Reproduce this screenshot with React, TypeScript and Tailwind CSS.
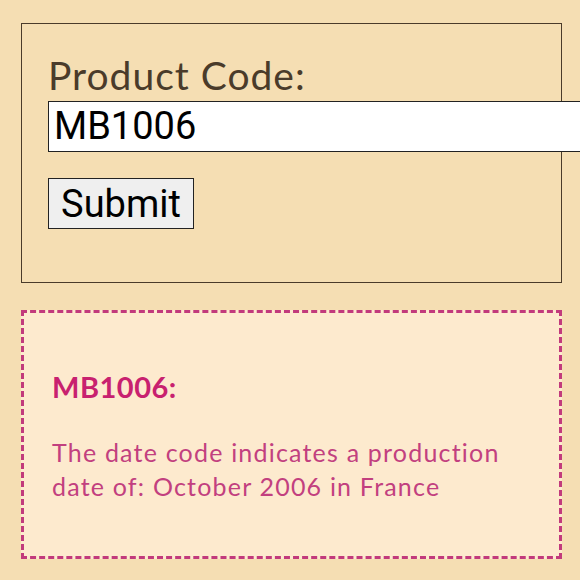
import React, { useState } from 'react';

const App: React.FC = () => {
    const [code, setCode] = useState('MB1006');

    return (
        <div className="min-h-[580px] w-[580px] overflow-hidden bg-[#f5deb3] pl-[21px] pr-[18px] pt-[23px] font-['Lato',sans-serif]">
            <form className="border border-[#4a3b2a] pl-[26px] pt-[27px] pb-[53px]" onSubmit={e => e.preventDefault()}>
                <label htmlFor="code" className="block text-[39px] leading-[48px] tracking-[1px] text-[#4a3b2a]">Product Code:</label>
                <input
                    id="code"
                    value={code}
                    onChange={e => setCode(e.target.value)}
                    className="mt-[2px] block h-[51px] w-[560px] border border-[#222] bg-white px-[5px] font-['Roboto',sans-serif] text-[38px] text-black outline-none"
                />
                <button type="submit" className="mt-[26px] block h-[51px] w-[146px] border border-[#222] bg-[#efefef] font-['Roboto',sans-serif] text-[38px] leading-none text-black">Submit</button>
            </form>

            <div className="mt-[27px] h-[249px] border-[3px] border-dashed border-[#c23a7c] bg-[#fdeace] px-[28px] pt-[56px]">
                <h2 className="text-[29px] font-bold leading-[36px] tracking-[0.5px] text-[#c8216f]">MB1006:</h2>
                <p className="mt-[30px] text-[25px] leading-[34px] tracking-[1.2px] text-[#c2407f]">The date code indicates a production date of: October 2006 in France</p>
            </div>
        </div>
    );
};

export default App;
